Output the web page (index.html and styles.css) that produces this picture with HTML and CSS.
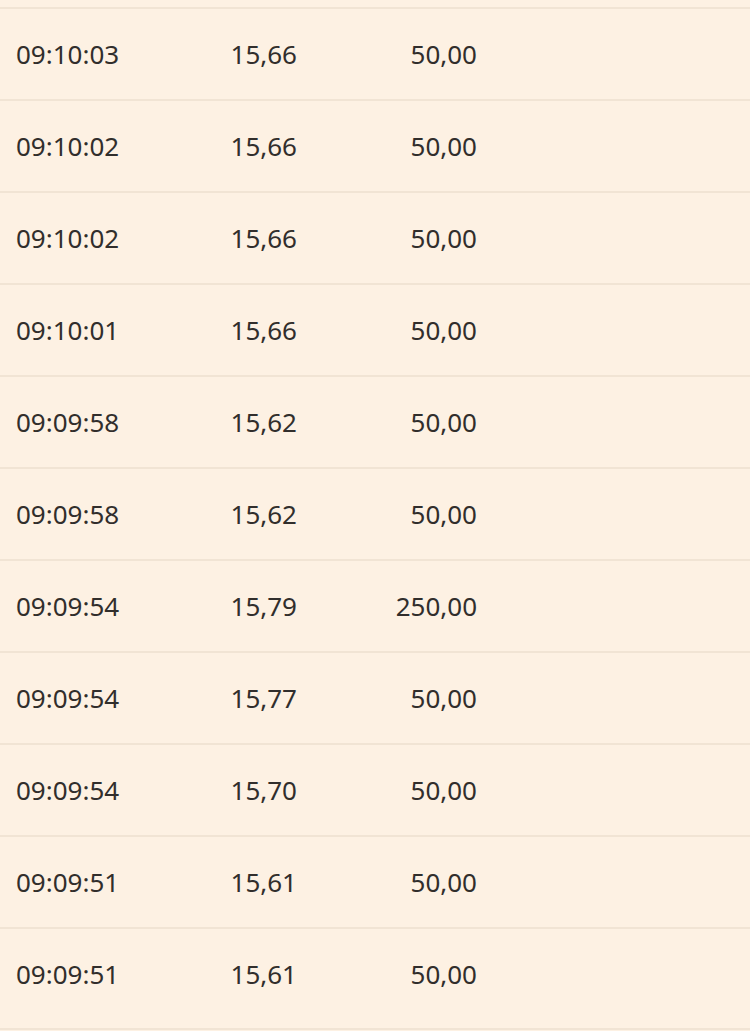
FILE: index.html
```html
<!DOCTYPE html>
<html lang="de">
<head>
<meta charset="utf-8">
<title>Trades</title>
<link rel="stylesheet" href="styles.css">
</head>
<body>
<div class="trades">
  <div class="row"><span class="time">09:10:03</span><span class="num">15,66</span><span class="num">50,00</span></div>
  <div class="row"><span class="time">09:10:02</span><span class="num">15,66</span><span class="num">50,00</span></div>
  <div class="row"><span class="time">09:10:02</span><span class="num">15,66</span><span class="num">50,00</span></div>
  <div class="row"><span class="time">09:10:01</span><span class="num">15,66</span><span class="num">50,00</span></div>
  <div class="row"><span class="time">09:09:58</span><span class="num">15,62</span><span class="num">50,00</span></div>
  <div class="row"><span class="time">09:09:58</span><span class="num">15,62</span><span class="num">50,00</span></div>
  <div class="row"><span class="time">09:09:54</span><span class="num">15,79</span><span class="num">250,00</span></div>
  <div class="row"><span class="time">09:09:54</span><span class="num">15,77</span><span class="num">50,00</span></div>
  <div class="row"><span class="time">09:09:54</span><span class="num">15,70</span><span class="num">50,00</span></div>
  <div class="row"><span class="time">09:09:51</span><span class="num">15,61</span><span class="num">50,00</span></div>
  <div class="row"><span class="time">09:09:51</span><span class="num">15,61</span><span class="num">50,00</span></div>
</div>
</body>
</html>
```
FILE: styles.css
```css
html, body {
  margin: 0;
  padding: 0;
  background: #fdf1e3;
  height: 100%;
  overflow: hidden;
}
body {
  font-family: "Source Sans Pro", "Noto Sans", "Open Sans", sans-serif;
  color: #312e2c;
}
.trades {
  padding-top: 7px;
  padding-bottom: 9px;
  border-bottom: 2px solid #f1e4d4;
}
.row {
  display: grid;
  grid-template-columns: 181px 100px 180px 1fr;
  align-items: center;
  height: 90px;
  padding-left: 16px;
  border-top: 2px solid #f1e4d4;
  font-size: 26px;
  line-height: 1;
}
.time {
  text-align: left;
}
.num {
  text-align: right;
}
```
